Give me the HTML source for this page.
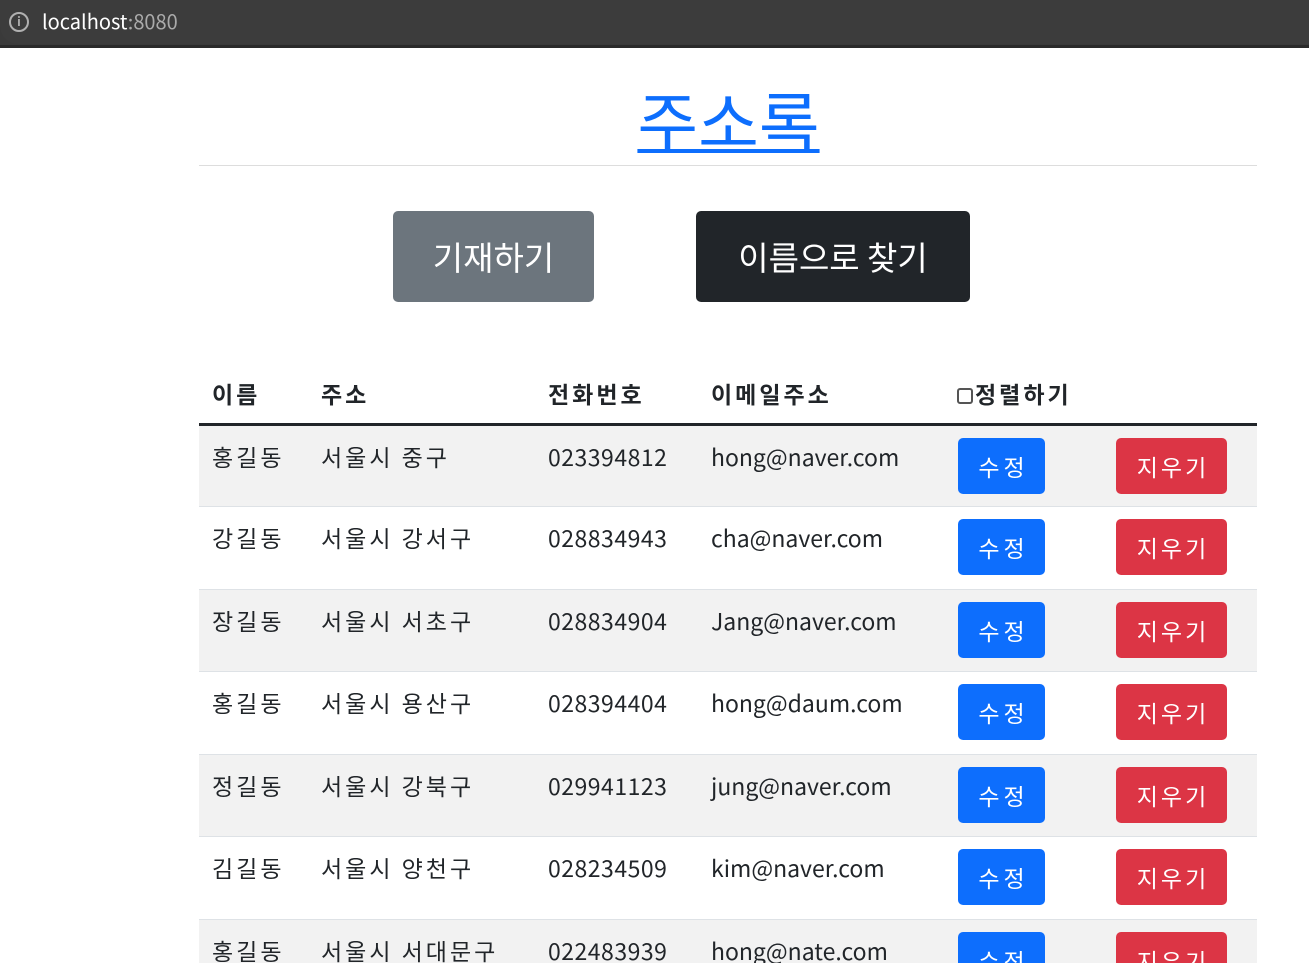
<!DOCTYPE html>
<html><head><meta charset="utf-8"><style>
*{box-sizing:border-box;margin:0;padding:0}
html,body{width:1309px;height:963px;overflow:hidden}
body{background:#fff;font-family:"Noto Sans CJK KR","Liberation Sans",sans-serif;color:#212529;position:relative}
.bar{position:absolute;left:0;top:0;width:1309px;height:48px;background:#3a3a3a;border-bottom:3px solid #2a2a2a}
.url{position:absolute;left:0;top:0;width:1309px;height:44px;background:#3c3c3c;border-radius:0 0 0 18px}
.ic{position:absolute;left:9px;top:12px;width:20px;height:20px;border:2px solid #b0b0b0;border-radius:50%;color:#b0b0b0;font-size:12px;font-weight:bold;text-align:center;line-height:16px}
.ut{position:absolute;left:42px;top:8px;font-size:20px;line-height:26px;color:#fff}
.ut span{color:#aaa}
h1{position:absolute;left:0;width:1457px;top:74px;text-align:center;font-size:66px;line-height:90px;font-weight:400}
h1 a{color:#0d6efd;text-decoration:underline;text-decoration-thickness:4px}
.hr{position:absolute;left:199px;top:165px;width:1058px;height:1px;background:#ddd}
.b{position:absolute;color:#fff;text-align:center;border-radius:5px;font-size:33px}
table{position:absolute;left:199px;top:364px;width:1058px;border-collapse:collapse;font-size:23px;line-height:32px}
th{font-weight:bold;text-align:left;height:60px;padding:0 0 0 13px;border-bottom:3px solid #212529;letter-spacing:3px}
td{height:82.5px;padding:0 0 0 13px;vertical-align:top;padding-top:14px;border-top:1px solid #dee2e6}
td.k{letter-spacing:3px}
td.n{letter-spacing:0.5px}
tr.o td{background:#f2f2f2}
td .e{display:inline-block;width:87px;height:56px;line-height:56px;background:#0d6efd;color:#fff;border-radius:5px;text-align:center;margin-top:-2px;letter-spacing:4px;padding-left:4px}
td .d{display:inline-block;width:111px;height:56px;line-height:56px;background:#dc3545;color:#fff;border-radius:5px;text-align:center;margin-top:-2px;letter-spacing:3px;padding-left:3px}
.cb{display:inline-block;width:16px;height:16px;border:2px solid #555;border-radius:3px;vertical-align:-1px;margin-right:2px}
</style></head><body>
<div class="bar"><div class="url"></div><div class="ic">i</div><div class="ut">localhost<span>:8080</span></div></div>
<h1><a>주소록</a></h1>
<div class="hr"></div>
<div class="b" style="left:393px;top:211px;width:201px;height:91px;line-height:91px;background:#6c757d">기재하기</div>
<div class="b" style="left:696px;top:211px;width:274px;height:91px;line-height:91px;background:#212529">이름으로 찾기</div>
<table>
<tr><th style="width:109px">이름</th><th style="width:227px">주소</th><th style="width:163px">전화번호</th><th style="width:247px">이메일주소</th><th style="width:158px;padding-left:12px"><span class="cb"></span>정렬하기</th><th></th></tr>
<tr class="o"><td class="k">홍길동</td><td class="k">서울시 중구</td><td class="n">023394812</td><td>hong@naver.com</td><td><span class="e">수정</span></td><td><span class="d">지우기</span></td></tr>
<tr><td class="k">강길동</td><td class="k">서울시 강서구</td><td class="n">028834943</td><td>cha@naver.com</td><td><span class="e">수정</span></td><td><span class="d">지우기</span></td></tr>
<tr class="o"><td class="k">장길동</td><td class="k">서울시 서초구</td><td class="n">028834904</td><td>Jang@naver.com</td><td><span class="e">수정</span></td><td><span class="d">지우기</span></td></tr>
<tr><td class="k">홍길동</td><td class="k">서울시 용산구</td><td class="n">028394404</td><td>hong@daum.com</td><td><span class="e">수정</span></td><td><span class="d">지우기</span></td></tr>
<tr class="o"><td class="k">정길동</td><td class="k">서울시 강북구</td><td class="n">029941123</td><td>jung@naver.com</td><td><span class="e">수정</span></td><td><span class="d">지우기</span></td></tr>
<tr><td class="k">김길동</td><td class="k">서울시 양천구</td><td class="n">028234509</td><td>kim@naver.com</td><td><span class="e">수정</span></td><td><span class="d">지우기</span></td></tr>
<tr class="o"><td class="k">홍길동</td><td class="k">서울시 서대문구</td><td class="n">022483939</td><td>hong@nate.com</td><td><span class="e">수정</span></td><td><span class="d">지우기</span></td></tr>
</table>
</body></html>
